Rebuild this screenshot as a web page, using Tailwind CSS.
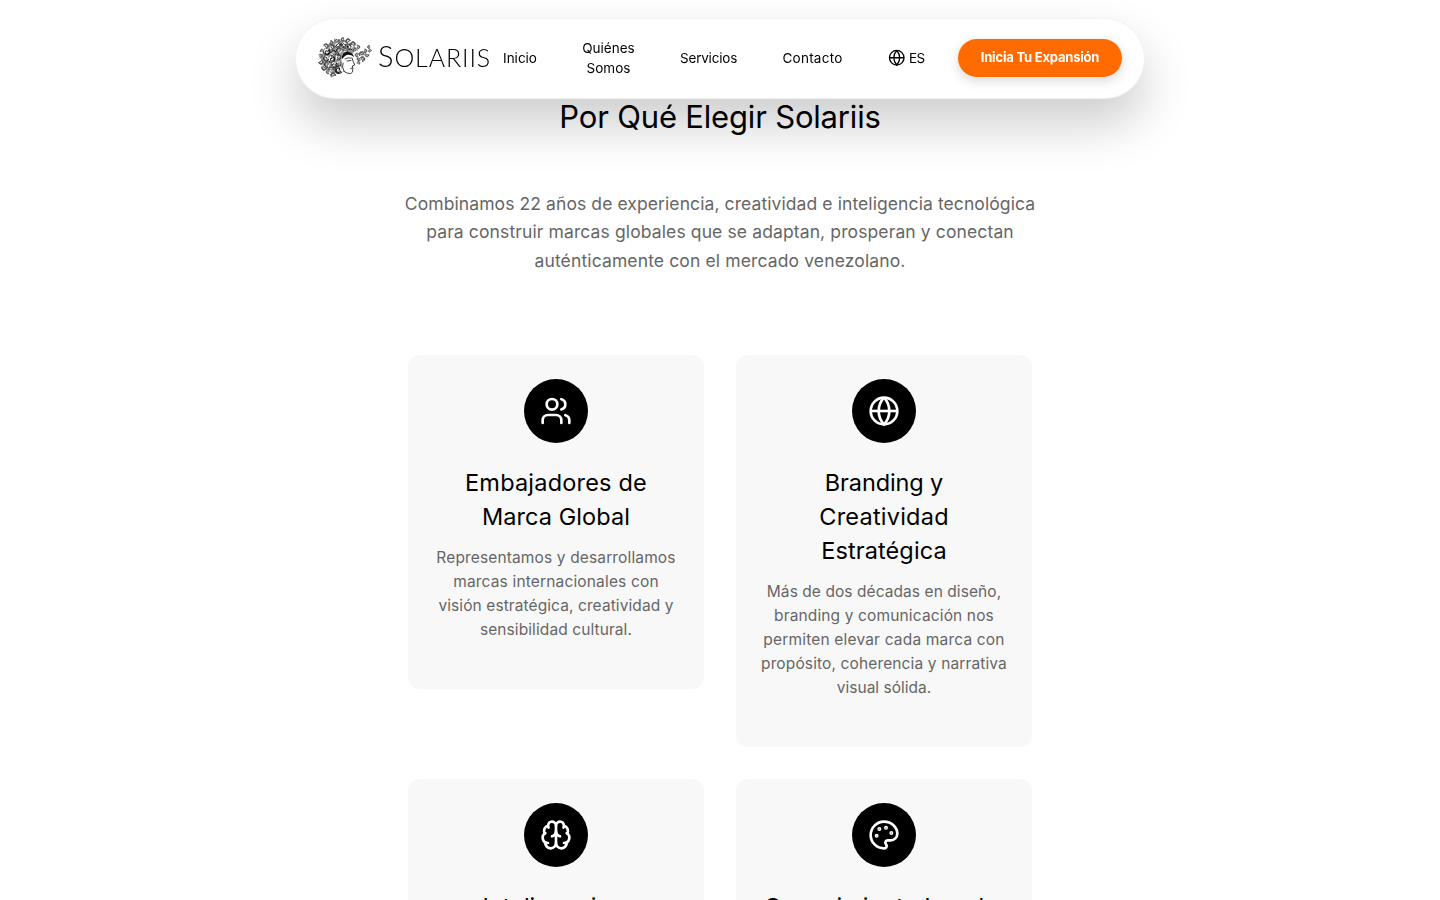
<!DOCTYPE html>
<html lang="es">
<head>
<meta charset="utf-8">
<title>Solariis</title>
<script src="https://cdn.jsdelivr.net/npm/@tailwindcss/browser@4"></script>
</head>
<body class="h-screen overflow-hidden bg-white font-[Inter,sans-serif] text-black">
<svg class="hidden">
  <symbol id="curl" viewBox="0 0 8 8"><path d="M1 5.6A3.4 3.4 0 1 1 6.6 6.2Q4.5 8 3 6.800z" fill="#fff"/><path d="M.9 5.400A3.300 3.300 0 1 1 6.800 6M2.200 5a2 2 0 1 1 3.600-.4c-.6 1.600-2.600 1-2.100-.5" fill="none" stroke="#111" stroke-width=".95" stroke-linecap="round"/></symbol>
  <symbol id="globe" viewBox="0 0 24 24"><circle cx="12" cy="12" r="10"/><path d="M12 2a14.5 14.5 0 0 0 0 20 14.5 14.5 0 0 0 0-20"/><path d="M2 12h20"/></symbol>
</svg>

<header class="fixed inset-x-0 top-[17.5px] z-10 mx-auto flex h-[81px] w-[850px] items-center rounded-full border border-black/5 bg-white px-[22px] shadow-[0_25px_50px_rgba(0,0,0,0.2)]">
  <a class="flex w-[173px] shrink-0 items-center">
    <svg class="h-[42px] w-[54px] shrink-0" viewBox="0 0 54 42">
      <path d="M7 10Q14 3 25 3q8 1 13 8l-4 7-6-2-4 4 1 12-9 5Q4 34 3 21q1-6 4-11z" fill="#999"/>
      <g id="curls"></g>
      <path d="M24 18q5-4 10-1l2 4-1 3 2 4-2 1 .3 2-1 1 .2 3q-1 3-6 1l-4-2-1-9z" fill="#fff"/>
      <path d="M27 22q3-2 6-1M29 24l4-.5M34 21l1 3 1.7 4-2.400 1 .5 2-2 .5m2 0-.2 3.500q-1 2.400-5 1.200l-4-2M25 26q-1.500 4 1 8" fill="none" stroke="#111" stroke-width=".8" stroke-linecap="round"/>
      <path d="M24 19q2-5 7-4 4 1 5 5-5-4-9-1l-3 3z" fill="#111"/>
    </svg>
    <span class="-mt-[5px] ml-[6px] font-[Lato] text-[25px] leading-none font-light tracking-[0.9px]"><span class="text-[29px]">S</span>OLARIIS</span>
  </a>
  <nav class="flex flex-1 items-center text-[13.5px] leading-5">
    <a class="ml-[12px] w-[34px] text-center whitespace-nowrap">Inicio</a>
    <a class="ml-[45px] w-[53px] text-center">Quiénes Somos</a>
    <a class="ml-[45px] w-[57px] text-center tracking-[-0.2px]">Servicios</a>
    <a class="ml-[45px] w-[61px] text-center tracking-[0.25px]">Contacto</a>
    <a class="ml-[44.500px] flex items-center gap-[4px] tracking-[-0.6px]"><svg class="size-[17.5px]" fill="none" stroke="currentColor" stroke-width="1.8"><use href="#globe"/></svg>ES</a>
  </nav>
  <a class="flex h-[38px] w-[164px] shrink-0 items-center justify-center rounded-full bg-[#ff6b00] text-[13px] font-bold tracking-[-0.2px] whitespace-nowrap text-white shadow-[0_4px_12px_rgba(0,0,0,0.15)]">Inicia Tu Expansión</a>
</header>

<main class="mx-auto w-[640px] pt-[97px] text-center">
  <h1 class="text-[31px] leading-10 tracking-[-0.18px]">Por Qué Elegir Solariis</h1>
  <p class="mt-[52.5px] text-[17.5px] leading-[28.8px] whitespace-nowrap text-[#666]"><span class="tracking-[0.09px]">Combinamos 22 años de experiencia, creatividad e inteligencia tecnológica</span><br><span class="tracking-[0.12px]">para construir marcas globales que se adaptan, prosperan y conectan</span><br><span class="tracking-[0.13px]">auténticamente con el mercado venezolano.</span></p>
  <section class="mt-[79.5px] grid grid-cols-2 items-start gap-8 px-2 whitespace-nowrap">
    <article class="flex h-[334px] flex-col items-center rounded-xl bg-[#f8f8f8] pt-6">
      <div class="flex size-16 items-center justify-center rounded-full bg-black text-white"><svg class="size-8" viewBox="0 0 24 24" fill="none" stroke="currentColor" stroke-width="2" stroke-linecap="round" stroke-linejoin="round"><path d="M16 21v-2a4 4 0 0 0-4-4H6a4 4 0 0 0-4 4v2"/><path d="M16 3.128a4 4 0 0 1 0 7.744"/><path d="M22 21v-2a4 4 0 0 0-3-3.87"/><circle cx="9" cy="7" r="4"/></svg></div>
      <h2 class="mt-[22.5px] text-[23.5px] leading-[34px]"><span class="tracking-[0.2px]">Embajadores de</span><br><span class="tracking-[0.07px]">Marca Global</span></h2>
      <p class="mt-3 text-[15.5px] leading-6 text-[#666]"><span class="tracking-[0.14px]">Representamos y desarrollamos</span><br><span class="tracking-[0.16px]">marcas internacionales con</span><br><span class="tracking-[0.09px]">visión estratégica, creatividad y</span><br><span class="tracking-[0.09px]">sensibilidad cultural.</span></p>
    </article>
    <article class="flex h-[392px] flex-col items-center rounded-xl bg-[#f8f8f8] pt-6">
      <div class="flex size-16 items-center justify-center rounded-full bg-black text-white"><svg class="size-8" fill="none" stroke="currentColor" stroke-width="2"><use href="#globe"/></svg></div>
      <h2 class="mt-[22.5px] text-[23.5px] leading-[34px]"><span class="tracking-[-0.12px]">Branding y</span><br><span class="tracking-[0.23px]">Creatividad</span><br><span class="tracking-[0.1px]">Estratégica</span></h2>
      <p class="mt-3 text-[15.5px] leading-6 text-[#666]"><span class="tracking-[0.07px]">Más de dos décadas en diseño,</span><br><span class="tracking-[0.14px]">branding y comunicación nos</span><br><span class="tracking-[0.18px]">permiten elevar cada marca con</span><br><span class="tracking-[0.13px]">propósito, coherencia y narrativa</span><br>visual sólida.</p>
    </article>
    <article class="flex h-[334px] flex-col items-center rounded-xl bg-[#f8f8f8] pt-6">
      <div class="flex size-16 items-center justify-center rounded-full bg-black text-white"><svg class="size-8" viewBox="0 0 24 24" fill="none" stroke="currentColor" stroke-width="2" stroke-linecap="round" stroke-linejoin="round"><path d="M12 18V5"/><path d="M15 13a4.17 4.17 0 0 1-3-4 4.17 4.17 0 0 1-3 4"/><path d="M17.598 6.5A3 3 0 1 0 12 5a3 3 0 1 0-5.598 1.5"/><path d="M17.997 5.125a4 4 0 0 1 2.526 5.77"/><path d="M18 18a4 4 0 0 0 2-7.464"/><path d="M19.967 17.483A4 4 0 1 1 12 18a4 4 0 1 1-7.967-.517"/><path d="M6 18a4 4 0 0 1-2-7.464"/><path d="M6.003 5.125a4 4 0 0 0-2.526 5.77"/></svg></div>
      <h2 class="mt-[22.5px] text-[23.5px] leading-[34px]">Inteligencia y</h2>
    </article>
    <article class="flex h-[334px] flex-col items-center rounded-xl bg-[#f8f8f8] pt-6">
      <div class="flex size-16 items-center justify-center rounded-full bg-black text-white"><svg class="size-8" viewBox="0 0 24 24" fill="none" stroke="currentColor" stroke-width="2" stroke-linecap="round" stroke-linejoin="round"><path d="M12 22a1 1 0 0 1 0-20 10 9 0 0 1 10 9 5 5 0 0 1-5 5h-2.25a1.75 1.75 0 0 0-1.4 2.8l.3.4a1.75 1.75 0 0 1-1.4 2.8z"/><circle cx="13.5" cy="6.5" r=".5" fill="currentColor"/><circle cx="17.5" cy="10.5" r=".5" fill="currentColor"/><circle cx="6.5" cy="12.5" r=".5" fill="currentColor"/><circle cx="8.5" cy="7.5" r=".5" fill="currentColor"/></svg></div>
      <h2 class="mt-[22.5px] text-[23.5px] leading-[34px]">Conocimiento Local y</h2>
    </article>
  </section>
</main>
<script>
  // Curls of hair: centre x, centre y, diameter.
  const curls = [[4,14,5],[2.5,19,5],[3,25,6],[6,31,6],[10,35,5],[15,38,6],[8,9,6],[13,5.5,5],[19,3.5,6],[25,2.5,5],[30,4,6],[35,7,6],[40,10,5],
    [9,15,8],[8,21.5,7],[9,27.5,7],[13,32,6],[14,10,6],[20,8,7],[26,8,7],[32,10,7],[37,13,5],[15.5,16,7],[14,22,8],[16,28,7],[20.500,33,9],[21,13.5,7],[27.500,13,6],[20.500,20,7],[21.500,26.500,6],
    [41,22,5],[39,18,5],[43.500,17,6],[44.500,22,6],[47,14,5],[49,18,5],[51,10,4],[52,14,4],[40.500,26,4]];
  document.getElementById('curls').innerHTML = curls.map(([x, y, d], i) =>
    `<use href="#curl" transform="translate(${x} ${y}) rotate(${i * 67 % 360})" x="${-d / 2}" y="${-d / 2}" width="${d}" height="${d}"/>`).join('');
</script>
</body>
</html>
